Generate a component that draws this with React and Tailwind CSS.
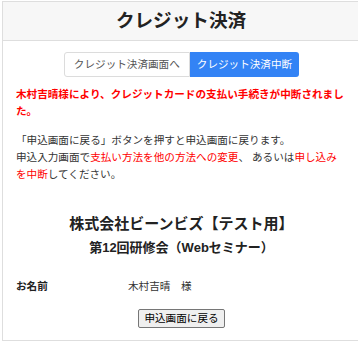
import React from "react";

const font = { fontFamily: '"Liberation Sans", "Noto Sans CJK JP", sans-serif' };

function App() {
  return (
    <div className="w-[358px] h-[342px] overflow-hidden bg-white" style={font}>
      <div className="ml-[2px] mt-px w-[358px] h-[340px] border border-[#dedede] text-[#333]">
        <div className="h-[39px] bg-[#f7f7f7] border-b border-[#dedede] flex items-center justify-center">
          <h1 className="text-[18.6px] font-bold text-[#222] leading-none">クレジット決済</h1>
        </div>

        <div className="pl-[13px] pr-[12px] pt-[11px]">
          <div className="flex justify-center">
            <div className="flex h-[25px] text-[10.6px]">
              <div className="flex items-center px-[9px] border border-[#dcdcdc] rounded-l-[3px] text-[#555] bg-white">
                クレジット決済画面へ
              </div>
              <div className="flex items-center px-[7px] bg-[#3383f5] text-white rounded-r-[3px]">
                クレジット決済中断
              </div>
            </div>
          </div>

          <p className="mt-[9px] w-[331px] text-[10.6px] leading-[17px] font-bold text-[#ff0000]">
            木村吉晴様により、クレジットカードの支払い手続きが中断されました。
          </p>

          <p className="mt-[12px] w-[331px] text-[10.6px] leading-[17px] text-[#333]">
            「申込画面に戻る」ボタンを押すと申込画面に戻ります。
            <br />
            申込入力画面で<span className="text-[#ff0000]">支払い方法を他の方法への変更</span>、 あるいは
            <span className="text-[#ff0000]">申し込みを中断</span>してください。
          </p>

          <div className="mt-[31px] text-center">
            <div className="text-[15px] leading-[20px] font-bold text-[#222]">株式会社ビーンビズ【テスト用】</div>
            <div className="mt-[5px] text-[13px] leading-[18px] font-bold text-[#222]">第12回研修会（Webセミナー）</div>
          </div>

          <div className="mt-[21px] flex text-[10.6px] leading-[17px]">
            <div className="w-[112px] font-bold text-[#222]">お名前</div>
            <div className="text-[#333]">木村吉晴　様</div>
          </div>

          <div className="mt-[14px] flex justify-center">
            <button className="h-[19px] px-[5px] text-[10.6px] leading-none text-black bg-[#efefef] border border-[#767676] rounded-[2px]">
              申込画面に戻る
            </button>
          </div>
        </div>
      </div>
    </div>
  );
}

export default App;
